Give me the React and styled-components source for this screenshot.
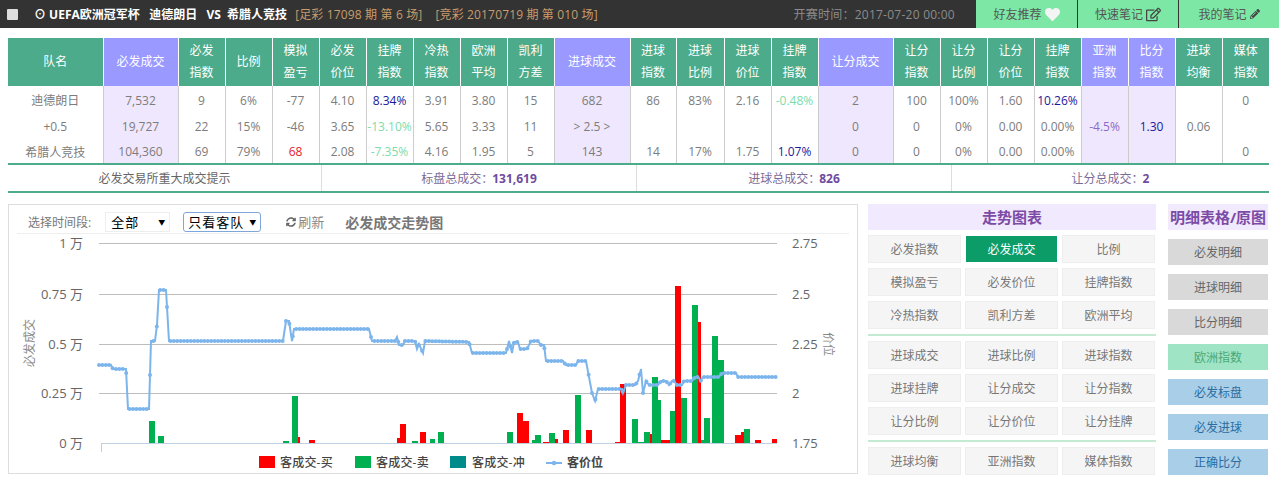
import React from "react";
import styled, { createGlobalStyle } from "styled-components";
import { FaHeart, FaRegEdit, FaPencilAlt, FaSyncAlt } from "react-icons/fa";

const FONT = `"Open Sans", "Noto Sans CJK SC", sans-serif`;

const GlobalStyle = createGlobalStyle`
  html, body {
    margin: 0;
    padding: 0;
    background: #fff;
    font-family: ${FONT};
    color: #666;
  }
`;

const Page = styled.div`
  width: 1279px;
  height: 483px;
  overflow: hidden;
`;

const TopBar = styled.div`
  height: 28px;
  background: #333;
  display: flex;
  align-items: center;
  font-size: 12px;
`;

const CheckBox = styled.span`
  width: 11px;
  height: 11px;
  margin-left: 7px;
  background: #ddd;
  border-radius: 1px;
`;

const Title = styled.div`
  margin-left: 16px;
  color: #fff;
  font-weight: 700;
  font-size: 12px;
  white-space: pre;
`;

const Issue = styled.div`
  margin-left: ${(p) => p.$gap}px;
  color: #c89c6c;
  font-size: 12px;
  letter-spacing: 0.15px;
`;

const StartTime = styled.div`
  margin-left: auto;
  margin-right: 20px;
  color: #8c8c8c;
  font-size: 12px;
  letter-spacing: 0.25px;
`;

const TopButton = styled.div`
  width: ${(p) => p.$w}px;
  height: 28px;
  margin-left: 1px;
  background: #7de8a5;
  color: #555;
  font-size: 12px;
  display: flex;
  align-items: center;
  justify-content: center;
  gap: 3px;
`;

const Table = styled.table`
  margin: 10px 0 0 8px;
  width: 1261px;
  table-layout: fixed;
  border-collapse: collapse;
  font-size: 12px;
  border-bottom: 2px solid #4cab8a;
`;

const Th = styled.th`
  width: ${(p) => p.$w}px;
  height: 48px;
  box-sizing: border-box;
  padding: 0;
  font-weight: 400;
  line-height: 22px;
  color: #fff;
  background: ${(p) => (p.$violet ? "#9999ff" : "#4cab8a")};
  border-left: 1px solid #fff;
  &:first-child {
    border-left: 0;
  }
`;

const Td = styled.td`
  height: 26px;
  box-sizing: border-box;
  padding: 2px 0 0;
  text-align: center;
  white-space: nowrap;
  color: ${(p) => p.$color || "#7c7c7c"};
  background: ${(p) => (p.$violet ? "#efe7fd" : "#fff")};
  border-left: 1px solid #ccc;
  &:first-child {
    border-left: 0;
  }
`;

const Summary = styled.div`
  margin-left: 8px;
  width: 1261px;
  height: 26px;
  display: grid;
  grid-template-columns: 313px 315px 315px 318px;
  border-bottom: 2px solid #4cab8a;
  font-size: 12px;
`;

const SummaryCell = styled.div`
  display: flex;
  align-items: center;
  justify-content: center;
  color: ${(p) => p.$color || "#666"};
  border-left: ${(p) => (p.$first ? "0" : "1px solid #ddd")};
  b {
    margin-left: -1px;
    color: #6f4ba0;
  }
`;

const Bottom = styled.div`
  margin: 11px 0 0 8px;
  display: flex;
  align-items: flex-start;
`;

const ChartPanel = styled.div`
  width: 850px;
  height: 270px;
  box-sizing: border-box;
  border: 1px solid #ddd;
`;

const Toolbar = styled.div`
  height: 29px;
  margin: 0 8px 0 8px;
  padding: 5px 0 0 11px;
  box-sizing: border-box;
  border-bottom: 1px solid #eee;
  display: flex;
  align-items: center;
  font-size: 12px;
  color: #777;
`;

const FakeSelect = styled.div`
  width: ${(p) => p.$w}px;
  height: 20px;
  margin-left: ${(p) => p.$gap}px;
  box-sizing: border-box;
  padding: 0 4px 0 ${(p) => (p.$focus ? 4 : 5)}px;
  display: flex;
  align-items: center;
  justify-content: space-between;
  font-size: 13px;
  letter-spacing: 1px;
  color: #000;
  border: 1px solid ${(p) => (p.$focus ? "#7fa6dc" : "#eee")};
  border-radius: ${(p) => (p.$focus ? 3 : 0)}px;
  span:last-child {
    font-size: 7px;
    letter-spacing: 0;
  }
`;

const Refresh = styled.div`
  margin-left: 25px;
  display: flex;
  align-items: center;
  gap: 2px;
  font-size: 13px;
  color: #888;
  svg {
    color: #666;
  }
`;

const ChartTitle = styled.div`
  margin-left: 21px;
  font-size: 14px;
  font-weight: 700;
  color: #777;
`;

const ChartSvg = styled.svg`
  display: block;
  font-family: ${FONT};
`;

const TrendColumn = styled.div`
  width: 288px;
  margin-left: 10px;
`;

const PanelTitle = styled.div`
  height: 26px;
  line-height: 26px;
  text-align: center;
  white-space: nowrap;
  background: #f1e9fd;
  color: #7c4ba6;
  font-weight: 700;
  font-size: 15px;
`;

const ButtonGrid = styled.div`
  display: grid;
  grid-template-columns: repeat(3, 93px);
  grid-auto-rows: 28px;
  gap: 5px 4px;
  margin-top: 5px;
`;

const TrendButton = styled.div`
  box-sizing: border-box;
  display: flex;
  align-items: center;
  justify-content: center;
  font-size: 12px;
  color: ${(p) => (p.$active ? "#fff" : "#777")};
  background: ${(p) => (p.$active ? "#0b9c68" : "#f5f5f5")};
  border: 1px solid ${(p) => (p.$active ? "#fff" : "#eee")};
`;

const Separator = styled.div`
  height: 2px;
  margin-top: 5px;
  background: #c2ebd2;
`;

const SideColumn = styled.div`
  width: 100px;
  margin-left: 12px;
`;

const SideButton = styled.div`
  height: 26px;
  margin-top: 9px;
  display: flex;
  align-items: center;
  justify-content: center;
  font-size: 12px;
  background: ${(p) => p.$bg};
  color: ${(p) => p.$color};
`;

const COLS = [95, 75, 47, 47, 47, 47, 47, 47, 47, 47, 76, 46, 48, 47, 47, 75, 47, 47, 47, 47, 47, 47, 47, 47];

const HEADERS = [
  ["队名"],
  ["必发成交", 1],
  ["必发", "指数"],
  ["比例"],
  ["模拟", "盈亏"],
  ["必发", "价位"],
  ["挂牌", "指数"],
  ["冷热", "指数"],
  ["欧洲", "平均"],
  ["凯利", "方差"],
  ["进球成交", 1],
  ["进球", "指数"],
  ["进球", "比例"],
  ["进球", "价位"],
  ["挂牌", "指数"],
  ["让分成交", 1],
  ["让分", "指数"],
  ["让分", "比例"],
  ["让分", "价位"],
  ["挂牌", "指数"],
  ["亚洲", "指数", 1],
  ["比分", "指数", 1],
  ["进球", "均衡"],
  ["媒体", "指数"],
];

const BLUE = "#1a1a9c";
const MINT = "#7ddcaa";
const RED = "#e8202a";

const ROWS = [
  ["迪德朗日", "7,532", "9", "6%", "-77", "4.10", ["8.34%", BLUE], "3.91", "3.80", "15", "682", "86", "83%", "2.16", ["-0.48%", MINT], "2", "100", "100%", "1.60", ["10.26%", BLUE], "", "", "", "0"],
  ["+0.5", "19,727", "22", "15%", "-46", "3.65", ["-13.10%", MINT], "5.65", "3.33", "11", "> 2.5 >", "", "", "", "", "0", "0", "0%", "0.00", "0.00%", ["-4.5%", "#8a6cc8"], ["1.30", BLUE], "0.06", ""],
  ["希腊人竞技", "104,360", "69", "79%", ["68", RED], "2.08", ["-7.35%", MINT], "4.16", "1.95", "5", "143", "14", "17%", "1.75", ["1.07%", BLUE], "0", "0", "0%", "0.00", "0.00%", "", "", "", "0"],
];

const VIOLET_COLS = [1, 10, 15, 20, 21];

const TREND_GROUPS = [
  ["必发指数", "必发成交", "比例", "模拟盈亏", "必发价位", "挂牌指数", "冷热指数", "凯利方差", "欧洲平均"],
  ["进球成交", "进球比例", "进球指数", "进球挂牌", "让分成交", "让分指数", "让分比例", "让分价位", "让分挂牌"],
  ["进球均衡", "亚洲指数", "媒体指数"],
];

const GREY = ["#d9d9d9", "#666"];
const GREEN = ["#a0e4c6", "#4aa878"];
const SKY = ["#a9cfe8", "#2a6ca0"];
const SIDE_BUTTONS = [
  ["必发明细", GREY],
  ["进球明细", GREY],
  ["比分明细", GREY],
  ["欧洲指数", GREEN],
  ["必发标盘", SKY],
  ["必发进球", SKY],
  ["正确比分", SKY],
];

// chart coordinates are written in page pixels, the svg starts at (9, 235)
const OX = 9;
const OY = 235;

const LINE = [
  [99, 366], [111, 366], [113, 370], [126, 370], [128, 410], [149, 410], [151, 342], [155, 342], [157, 326], [159, 291],
  [166, 291], [169, 342], [283, 342], [286, 322], [289, 322], [292, 342], [294, 330], [369, 330], [372, 342], [395, 342],
  [397, 338], [399, 346], [403, 346], [405, 342], [415, 342], [417, 350], [419, 345], [423, 354], [425, 342], [469, 343],
  [472, 354], [506, 354], [509, 342], [512, 354], [514, 343], [518, 343], [520, 350], [527, 350], [531, 342], [538, 342],
  [541, 346], [544, 346], [546, 362], [563, 362], [566, 366], [576, 366], [578, 362], [586, 362], [589, 378], [592, 394],
  [595, 402], [598, 390], [622, 390], [623, 394], [626, 386], [635, 386], [638, 382], [641, 370], [643, 394], [646, 382],
  [649, 386], [658, 386], [661, 382], [666, 382], [669, 386], [672, 382], [674, 382], [677, 386], [682, 386], [684, 382],
  [692, 382], [695, 378], [698, 378], [701, 382], [703, 378], [719, 378], [722, 374], [736, 374], [738, 378], [777, 378],
];

// [x, width, top, colour]
const R = "#ff0000";
const G = "#00b050";
const BARS = [
  [149, 6, 422, G], [158, 6, 437, G], [283, 6, 442, G], [298, 2, 438, R], [292, 6, 397, G], [309, 6, 441, R],
  [397, 3, 439, R], [400, 6, 425, R], [412, 6, 442, G], [420, 6, 433, R], [430, 5, 440, G], [438, 6, 433, G],
  [507, 6, 433, G], [517, 6, 414, R], [523, 6, 422, R], [532, 3, 441, G], [535, 6, 436, G], [543, 6, 443, R],
  [549, 6, 434, G], [555, 3, 440, R], [563, 6, 431, R], [575, 6, 396, G], [586, 6, 431, R], [615, 5, 443, R],
  [620, 6, 385, R], [632, 6, 420, G], [638, 6, 443, G], [644, 6, 433, G], [650, 2, 435, R], [652, 6, 378, G],
  [658, 3, 401, G], [661, 9, 441, R], [670, 5, 412, G], [675, 6, 287, R], [681, 6, 399, G], [692, 6, 306, G],
  [698, 3, 323, R], [701, 3, 441, G], [704, 6, 419, G], [712, 6, 337, G], [718, 6, 361, G], [735, 6, 436, R],
  [741, 3, 433, R], [744, 6, 430, G], [755, 6, 441, R], [772, 5, 440, R],
];

const LEFT_AXIS = [["1 万", 244], ["0.75 万", 295], ["0.5 万", 345], ["0.25 万", 394], ["0 万", 444]];
const RIGHT_AXIS = [["2.75", 244], ["2.5", 295], ["2.25", 345], ["2", 394], ["1.75", 444]];

const LEGEND = [
  [259, 280, R, "客成交-买"],
  [355, 376, G, "客成交-卖"],
  [450, 472, "#008b8b", "客成交-冲"],
];

// evenly spaced markers along the polyline, like one point per sample
function samplePoints(line, step) {
  const points = [];
  for (let x = line[0][0]; x <= line[line.length - 1][0]; x += step) {
    const i = line.findIndex((p) => p[0] >= x);
    const [x1, y1] = line[Math.max(i - 1, 0)];
    const [x2, y2] = line[i];
    const y = x2 === x1 ? y2 : y1 + ((y2 - y1) * (x - x1)) / (x2 - x1);
    points.push([x, y]);
  }
  return points;
}

function Chart() {
  const path = LINE.map(([x, y]) => `${x - OX},${y - OY}`).join(" ");
  const points = samplePoints(LINE, 3.4);
  return (
    <ChartSvg width="848" height="239" viewBox="0 0 848 239">
      {LEFT_AXIS.slice(0, 4).map(([, y]) => (
        <line key={y} x1={99 - OX} x2={777 - OX} y1={y - OY + 0.5} y2={y - OY + 0.5} stroke="#bdbdbd" />
      ))}
      {BARS.map(([x, w, top, color]) => (
        <rect key={`${x}-${top}`} x={x - OX} y={top - OY} width={w} height={444 - top} fill={color} />
      ))}
      <line x1={101 - OX} x2={777 - OX} y1={444.5 - OY} y2={444.5 - OY} stroke="#c0d0e0" />
      <line x1={101.5 - OX} x2={101.5 - OX} y1={444 - OY} y2={453 - OY} stroke="#c0d0e0" />
      <polyline points={path} fill="none" stroke="#7cb5ec" strokeWidth="2" />
      {points.map(([x, y]) => (
        <circle key={x} cx={x - OX} cy={y - OY} r="2" fill="#7cb5ec" />
      ))}
      {LEFT_AXIS.map(([label, y]) => (
        <text key={label} x={83 - OX} y={y - OY + 5} textAnchor="end" fontSize="13" fill="#666">
          {label}
        </text>
      ))}
      {RIGHT_AXIS.map(([label, y]) => (
        <text key={label} x={792 - OX} y={y - OY + 5} fontSize="13" fill="#666">
          {label}
        </text>
      ))}
      <text transform={`translate(${34 - OX} ${344 - OY}) rotate(-90)`} textAnchor="middle" fontSize="12" fill="#888">
        必发成交
      </text>
      <text transform={`translate(${824 - OX} ${345 - OY}) rotate(90)`} textAnchor="middle" fontSize="12" fill="#888">
        价位
      </text>
      {LEGEND.map(([box, label, color, name]) => (
        <React.Fragment key={name}>
          <rect x={box - OX} y={457 - OY} width="16" height="12" fill={color} />
          <text x={label - OX} y={468 - OY} fontSize="12" letterSpacing="0.2" fontWeight="500" fill="#444">
            {name}
          </text>
        </React.Fragment>
      ))}
      <line x1={546 - OX} x2={562 - OX} y1={464 - OY} y2={464 - OY} stroke="#7cb5ec" strokeWidth="2" />
      <circle cx={554 - OX} cy={464 - OY} r="2.2" fill="#7cb5ec" />
      <text x={567 - OX} y={468 - OY} fontSize="12" fontWeight="700" fill="#444">客价位</text>
    </ChartSvg>
  );
}

function cell(value) {
  return Array.isArray(value) ? value : [value, undefined];
}

export default function App() {
  return (
    <Page>
      <GlobalStyle />
      <TopBar>
        <CheckBox />
        <Title>⊙ UEFA欧洲冠军杯   迪德朗日   VS  希腊人竞技</Title>
        <Issue $gap={8}>[足彩 17098 期 第 6 场]</Issue>
        <Issue $gap={13}>[竞彩 20170719 期 第 010 场]</Issue>
        <StartTime>开赛时间：2017-07-20 00:00</StartTime>
        <TopButton $w={101}>好友推荐 <FaHeart size={15} color="#f4f4f4" /></TopButton>
        <TopButton $w={100}>快速笔记 <FaRegEdit size={15} color="#444" /></TopButton>
        <TopButton $w={100}>我的笔记 <FaPencilAlt size={10} color="#444" /></TopButton>
      </TopBar>
      <Table>
        <thead>
          <tr>
            {HEADERS.map((head, i) => {
              const labels = head.filter((h) => typeof h === "string");
              return (
                <Th key={i} $w={COLS[i]} $violet={head.includes(1)}>
                  {labels.map((label) => (
                    <div key={label}>{label}</div>
                  ))}
                </Th>
              );
            })}
          </tr>
        </thead>
        <tbody>
          {ROWS.map((row, r) => (
            <tr key={r}>
              {row.map((value, i) => {
                const [text, color] = cell(value);
                return (
                  <Td key={i} $color={color} $violet={VIOLET_COLS.includes(i)}>
                    {text}
                  </Td>
                );
              })}
            </tr>
          ))}
        </tbody>
      </Table>
      <Summary>
        <SummaryCell $first>必发交易所重大成交提示</SummaryCell>
        <SummaryCell $color="#7d6b96">标盘总成交：<b>131,619</b></SummaryCell>
        <SummaryCell $color="#7d6b96">进球总成交：<b>826</b></SummaryCell>
        <SummaryCell $color="#7d6b96">让分总成交：<b>2</b></SummaryCell>
      </Summary>
      <Bottom>
        <ChartPanel>
          <Toolbar>
            选择时间段:
            <FakeSelect $w={65} $gap={14}><span>全部</span><span>▼</span></FakeSelect>
            <FakeSelect $w={78} $gap={13} $focus><span>只看客队</span><span>▼</span></FakeSelect>
            <Refresh><FaSyncAlt size={10} />刷新</Refresh>
            <ChartTitle>必发成交走势图</ChartTitle>
          </Toolbar>
          <Chart />
        </ChartPanel>
        <TrendColumn>
          <PanelTitle>走势图表</PanelTitle>
          {TREND_GROUPS.map((group, g) => (
            <React.Fragment key={g}>
              {g > 0 && <Separator />}
              <ButtonGrid>
                {group.map((name) => (
                  <TrendButton key={name} $active={name === "必发成交"}>{name}</TrendButton>
                ))}
              </ButtonGrid>
            </React.Fragment>
          ))}
        </TrendColumn>
        <SideColumn>
          <PanelTitle>明细表格/原图</PanelTitle>
          {SIDE_BUTTONS.map(([name, [bg, color]]) => (
            <SideButton key={name} $bg={bg} $color={color}>{name}</SideButton>
          ))}
        </SideColumn>
      </Bottom>
    </Page>
  );
}
